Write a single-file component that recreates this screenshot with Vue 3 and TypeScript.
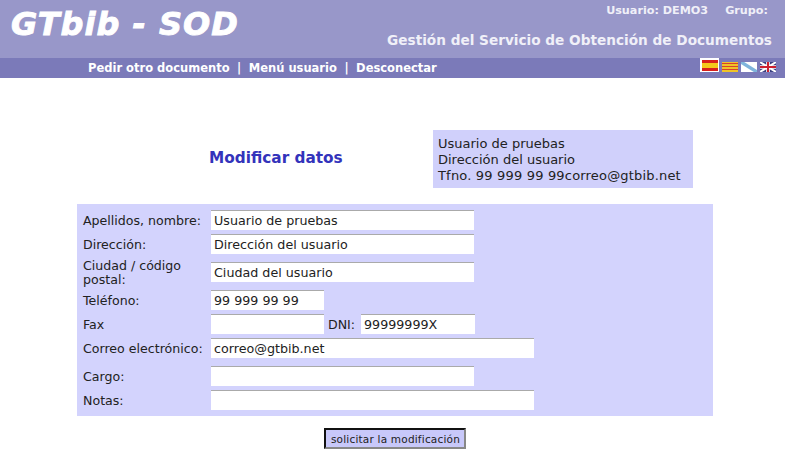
<script setup lang="ts">
const links = ['Pedir otro documento', 'Menú usuario', 'Desconectar']
</script>

<template>
  <div class="page">
    <header class="head">
      <div class="logo">GTbib - SOD</div>
      <div class="head-right">
        <div class="user"><span>Usuario: DEMO3</span><span>Grupo:</span></div>
        <div class="title">Gestión del Servicio de Obtención de Documentos</div>
      </div>
    </header>
    <nav class="nav">
      <div class="links">
        <template v-for="(l, i) in links" :key="l">
          <span v-if="i" class="sep">|</span>
          <a>{{ l }}</a>
        </template>
      </div>
      <div class="flags">
        <svg width="19" height="14" viewBox="0 0 19 14">
          <rect width="19" height="14" fill="#fff" />
          <rect x="2" y="2" width="16" height="11" fill="#d8201c" />
          <rect x="2" y="5" width="16" height="5" fill="#f4c81c" />
        </svg>
        <svg width="16" height="10" viewBox="0 0 16 10">
          <rect width="16" height="10" fill="#eec428" />
          <path d="M0 1.5h16M0 4.5h16M0 7.5h16" stroke="#d8402c" stroke-width="1.2" />
        </svg>
        <svg width="16" height="10" viewBox="0 0 16 10">
          <rect width="16" height="10" fill="#fff" />
          <path d="M0 0L16 10" stroke="#7fb4dc" stroke-width="3.4" />
        </svg>
        <svg width="16" height="10" viewBox="0 0 16 10">
          <rect width="16" height="10" fill="#3a3f80" />
          <path d="M0 0L16 10M16 0L0 10" stroke="#fff" stroke-width="2" />
          <path d="M8 0V10M0 5H16" stroke="#fff" stroke-width="3.6" />
          <path d="M8 0V10M0 5H16" stroke="#cc2030" stroke-width="2" />
        </svg>
      </div>
    </nav>

    <main class="main">
      <section class="intro">
        <h1>Modificar datos</h1>
        <div class="card">
          <div>Usuario de pruebas</div>
          <div>Dirección del usuario</div>
          <div class="contact">Tfno. 99 999 99 99correo@gtbib.net</div>
        </div>
      </section>

      <form class="panel" @submit.prevent>
        <div class="row">
          <label>Apellidos, nombre:</label>
          <input class="w-m" value="Usuario de pruebas" />
        </div>
        <div class="row">
          <label>Dirección:</label>
          <input class="w-m" value="Dirección del usuario" />
        </div>
        <div class="row">
          <label>Ciudad / código postal:</label>
          <input class="w-m" value="Ciudad del usuario" />
        </div>
        <div class="row">
          <label>Teléfono:</label>
          <input class="w-s" value="99 999 99 99" />
        </div>
        <div class="row">
          <label>Fax</label>
          <input class="w-s" />
          <span class="dni">DNI:</span>
          <input class="w-d" value="99999999X" />
        </div>
        <div class="row wide-gap">
          <label>Correo electrónico:</label>
          <input class="w-l" value="correo@gtbib.net" />
        </div>
        <div class="row">
          <label>Cargo:</label>
          <input class="w-m" />
        </div>
        <div class="row">
          <label>Notas:</label>
          <input class="w-l" />
        </div>
      </form>

      <div class="actions">
        <button type="button">solicitar la modificación</button>
      </div>
    </main>
  </div>
</template>

<style>
html, body { margin: 0; background: #fff; }
</style>

<style scoped>
.page {
  width: 785px;
  height: 468px;
  overflow: hidden;
  font-family: "DejaVu Sans", Verdana, sans-serif;
  font-size: 12px;
  color: #222;
}
.head {
  height: 58px;
  background: #9897c9;
  display: flex;
  justify-content: space-between;
  color: #f0f0f8;
}
.logo {
  margin: 3px 0 0 11px;
  font-family: "DejaVu Sans", sans-serif;
  font-weight: bold;
  font-style: italic;
  font-size: 32px;
  line-height: 42px;
  color: #fff;
  -webkit-text-stroke: 0.9px #fff;
  white-space: pre;
  letter-spacing: 1px;
}
.head-right {
  padding-right: 13px;
  text-align: right;
  font-weight: bold;
}
.user {
  display: flex;
  justify-content: flex-end;
  gap: 17px;
  padding: 4px 4px 0 0;
  font-size: 11.2px;
  line-height: 14px;
}
.title {
  margin-top: 13px;
  font-size: 13.65px;
  line-height: 18px;
}
.nav {
  height: 20px;
  background: #7b7ab9;
  display: flex;
  justify-content: space-between;
  color: #fff;
  font-weight: bold;
  font-size: 11.5px;
  line-height: 20px;
}
.links { padding-left: 88px; display: flex; gap: 7.5px; }
.sep { font-weight: bold; }
.flags {
  display: flex;
  align-items: flex-end;
  gap: 3px;
  padding-right: 9px;
  height: 14px;
}
.flags svg { display: block; }
.main { display: flex; flex-direction: column; align-items: stretch; }
.intro {
  margin: 52px 0 0 0;
  height: 58px;
  display: flex;
}
h1 {
  margin: 0 0 2px;
  width: 433px;
  padding-left: 209px;
  box-sizing: border-box;
  align-self: center;
  font-size: 15.3px;
  line-height: 20px;
  color: #3333bb;
  font-weight: bold;
}
.card {
  width: 260px;
  box-sizing: border-box;
  padding: 6px 5px 4px;
  background: #d0d0fb;
  font-size: 13px;
  line-height: 16px;
  white-space: nowrap;
}
.contact { letter-spacing: 0.18px; }
.panel {
  margin: 16px 0 0 77px;
  width: 636px;
  height: 212px;
  box-sizing: border-box;
  padding: 6px;
  background: #d3d3fd;
  display: flex;
  flex-direction: column;
  gap: 4px;
}
.row {
  display: flex;
  align-items: center;
  min-height: 20px;
}
.row.wide-gap { margin-bottom: 4px; }
label {
  width: 128px;
  padding-top: 1px;
  box-sizing: border-box;
  line-height: 14px;
  font-size: 12.6px;
  flex: none;
}
input {
  box-sizing: border-box;
  height: 20px;
  margin: 0;
  border: 0;
  border-top: 1px solid #aaa;
  background: #fff;
  padding: 0 3px 1px;
  font: 12.7px "DejaVu Sans", Verdana, sans-serif;
  color: #222;
  outline: none;
}
.w-m { width: 263px; }
.w-s { width: 113px; }
.w-d { width: 114px; }
.w-l { width: 323px; }
.dni { width: 37px; padding-left: 4px; box-sizing: border-box; font-size: 12.6px; padding-top: 1px; }
.actions { display: flex; padding: 12px 0 0 324px; }
button {
  box-sizing: border-box;
  width: 142px;
  height: 21px;
  padding: 0 0 0 1px;
  background: #c8c8fa;
  border: 2px solid;
  border-color: #111 #888 #888 #111;
  font: 10.5px "DejaVu Sans", Verdana, sans-serif;
  color: #222;
  letter-spacing: 0.2px;
}
</style>
